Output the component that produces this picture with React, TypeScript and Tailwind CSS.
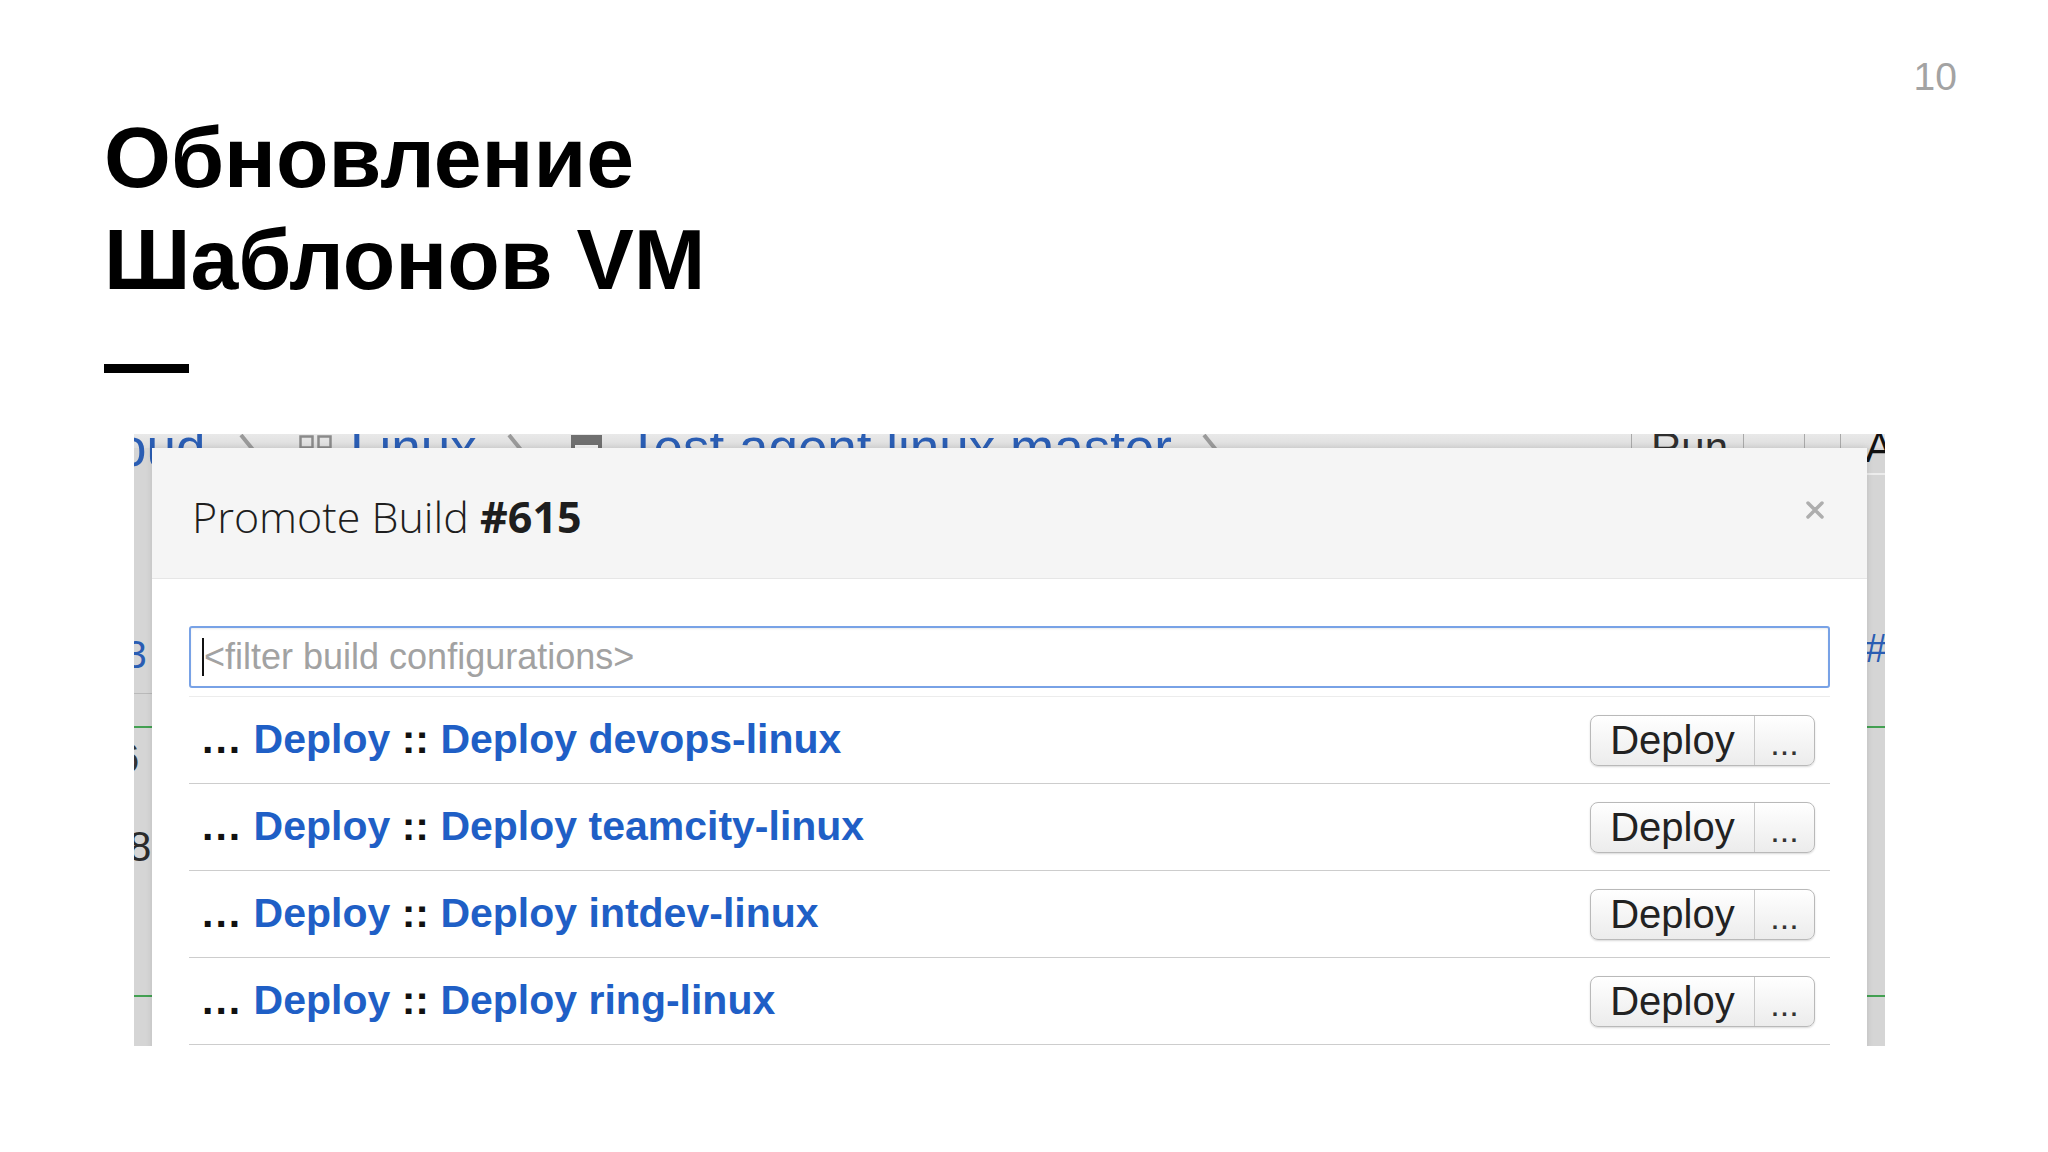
import React from "react";

const rows = ["devops-linux", "teamcity-linux", "intdev-linux", "ring-linux"];

function Chevron() {
  return (
    <svg width="22" height="44" viewBox="0 0 22 44" className="mt-[13px]">
      <path d="M2 1 L19 22 L2 43" fill="none" stroke="#9a9a9a" strokeWidth="4" />
    </svg>
  );
}

function VSep() {
  return <div className="w-px h-[40px] bg-[#a9a9a9]" />;
}

export default function App() {
  return (
    <div
      className="relative w-[2048px] h-[1152px] bg-white overflow-hidden"
      style={{ fontFamily: '"Liberation Sans", Arial, sans-serif' }}
    >
      {/* page number */}
      <div className="flex justify-end h-[106px] pt-[57px] pr-[91px]">
        <span className="text-[39px] leading-[39px] text-[#a3a3a3]">10</span>
      </div>

      {/* title */}
      <div className="pl-[104px] text-[86px] leading-[102px] font-bold text-black">
        <div>Обновление</div>
        <div>Шаблонов VM</div>
      </div>

      {/* dash */}
      <div className="mt-[54px] ml-[104px] w-[85px] h-[9px] bg-black" />

      {/* screenshot */}
      <div className="relative mt-[61px] ml-[134px] w-[1751px] h-[612px] overflow-hidden bg-[#d5d5d5]">
        {/* background page: breadcrumb band */}
        <div className="flow-root h-[14px] bg-gradient-to-b from-[#e9e9e9] to-[#dcdcdc]">
          <div className="flex items-start -mt-[13px] leading-[54px] text-[53px] whitespace-nowrap">
            <div className="ml-[-67px] w-[172px] shrink-0 text-[#2a5db3]">Cloud</div>
            <div className="w-[60px] shrink-0">
              <Chevron />
            </div>
            <div className="w-[51px] shrink-0 mt-[14px]">
              <svg width="34" height="28" viewBox="0 0 34 28">
                <rect x="1.5" y="1.5" width="12" height="11" fill="none" stroke="#8a8a8a" strokeWidth="2.5" />
                <rect x="19.5" y="1.5" width="12" height="11" fill="none" stroke="#8a8a8a" strokeWidth="2.5" />
                <rect x="1.5" y="16.5" width="12" height="11" fill="none" stroke="#8a8a8a" strokeWidth="2.5" />
                <rect x="19.5" y="16.5" width="12" height="11" fill="none" stroke="#8a8a8a" strokeWidth="2.5" />
              </svg>
            </div>
            <div className="w-[157px] shrink-0 text-[#2a5db3]">Linux</div>
            <div className="w-[64px] shrink-0">
              <Chevron />
            </div>
            <div className="w-[56px] shrink-0 mt-[14px]">
              <svg width="31" height="30" viewBox="0 0 31 30">
                <rect x="2" y="2" width="27" height="26" fill="#f2f2f2" stroke="#6f6f6f" strokeWidth="4" />
                <rect x="2" y="2" width="27" height="8" fill="#6f6f6f" />
              </svg>
            </div>
            <div className="w-[575px] shrink-0 text-[#2a5db3]">Test agent linux master</div>
            <div className="w-[429px] shrink-0">
              <Chevron />
            </div>
            <div className="w-[20px] shrink-0">
              <VSep />
            </div>
            <div className="w-[92px] shrink-0 text-[42px] text-[#2e2e2e]">Run</div>
            <div className="w-[61px] shrink-0">
              <VSep />
            </div>
            <div className="w-[36px] shrink-0">
              <VSep />
            </div>
            <div className="w-[25px] shrink-0">
              <VSep />
            </div>
            <div className="shrink-0 text-[42px] text-[#111]">A</div>
          </div>
        </div>

        {/* background page: side fragments */}
        <div className="flex justify-between">
          <div className="w-[18px] flex flex-col overflow-hidden">
            <div className="mt-[187px] ml-[-9px] h-[39px] text-[39px] leading-[39px] text-[#2a5db3]">3</div>
            <div className="mt-[19px] h-px bg-[#b9b9b9]" />
            <div className="mt-[32px] h-[2px] bg-[#43a052]" />
            <div className="mt-[10px] ml-[-17px] h-[40px] text-[40px] leading-[40px] text-[#333]">6</div>
            <div className="mt-[48px] ml-[-6px] h-[42px] text-[42px] leading-[42px] text-[#2b2b2b]">8</div>
            <div className="mt-[127px] h-[2px] bg-[#43a052]" />
          </div>
          <div className="w-[18px] flex flex-col overflow-hidden">
            <div className="mt-[25px] h-[2px] bg-[#ececec]" />
            <div className="mt-[153px] ml-[-2px] h-[40px] text-[40px] leading-[40px] text-[#2a5db3]">#</div>
            <div className="mt-[58px] h-[2px] bg-[#43a052]" />
            <div className="mt-[267px] h-[2px] bg-[#43a052]" />
          </div>
        </div>

        {/* modal dialog over the page */}
        <div className="absolute left-[18px] top-[14px] w-[1715px] h-[640px] bg-white shadow-[0_0_6px_rgba(0,0,0,0.12)]">
          <div className="h-[131px] bg-[#f5f5f5] border-b border-[#e6e6e6] flex items-start justify-between pl-[40px] pr-[43px] pt-[40px]">
            <div
              className="text-[43px] leading-[58px] font-light text-[#1e1e1e]"
              style={{ fontFamily: '"Open Sans", "Liberation Sans", sans-serif' }}
            >
              Promote Build <span className="font-bold">#615</span>
            </div>
            <svg width="18" height="18" viewBox="0 0 18 18" className="mt-[13px]">
              <path d="M2 2 L16 16 M16 2 L2 16" stroke="#aeaeae" strokeWidth="3.5" strokeLinecap="round" />
            </svg>
          </div>

          <div className="px-[37px] pt-[47px]">
            <div className="h-[62px] border-2 border-[#78a2e6] rounded-[3px] bg-white flex items-center pl-[11px] shadow-[inset_0_1px_2px_rgba(0,0,0,0.08)]">
              <span className="w-[2px] h-[38px] bg-[#111]" />
              <span className="text-[36px] leading-[40px] text-[#a2a2a2]">&lt;filter build configurations&gt;</span>
            </div>

            <div className="mt-[8px] border-t border-[#ececec]">
              {rows.map((r) => (
                <div
                  key={r}
                  className="h-[87px] border-b border-[#cdcdcd] flex items-center justify-between pl-[13px] pr-[15px]"
                >
                  <div className="text-[41px] font-bold whitespace-pre">
                    <span className="text-[#111] tracking-[2px]">...</span>
                    <span className="text-[#111]"> </span>
                    <span className="text-[#1f5fc6]">Deploy</span>
                    <span className="text-[#111]"> :: </span>
                    <span className="text-[#1f5fc6]">Deploy {r}</span>
                  </div>
                  <div className="flex h-[51px] border border-[#b9b9b9] rounded-[8px] bg-gradient-to-b from-white to-[#ececec] shadow-[0_1px_2px_rgba(0,0,0,0.15)]">
                    <div className="w-[163px] flex items-center justify-center text-[40px] leading-[49px] text-[#222]">
                      Deploy
                    </div>
                    <div className="w-[60px] flex items-center justify-center border-l border-[#c9c9c9] text-[34px] leading-[49px] text-[#333] pt-[6px]">
                      ...
                    </div>
                  </div>
                </div>
              ))}
            </div>
          </div>
        </div>
      </div>
    </div>
  );
}
